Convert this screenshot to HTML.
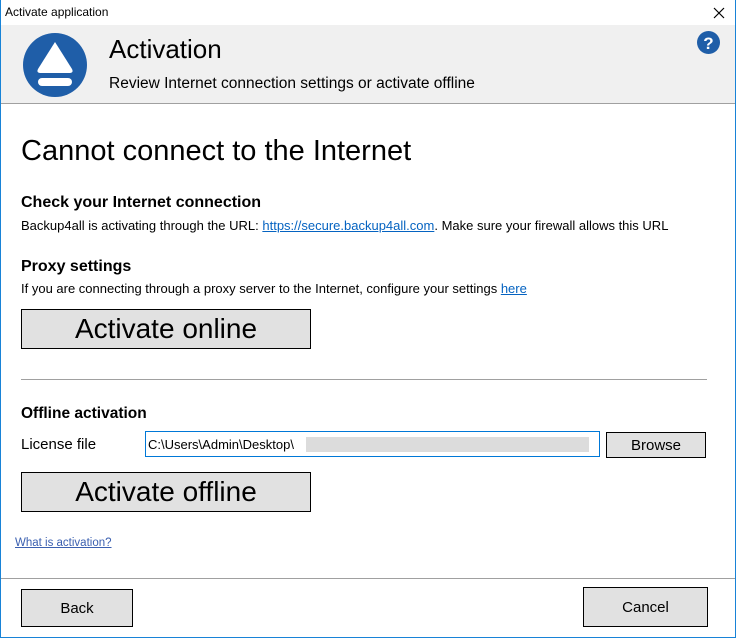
<!DOCTYPE html>
<html><head><style>
*{margin:0;padding:0;box-sizing:border-box}
body{width:736px;height:638px;background:#fff;font-family:"Liberation Sans",sans-serif;color:#000;position:relative;overflow:hidden}
.a{position:absolute;white-space:nowrap}
.frame{position:absolute;left:0;top:0;width:736px;height:638px;border:1px solid #1883d7;border-top:none}
.btn{position:absolute;background:#e1e1e1;border:1px solid #000;display:flex;align-items:center;justify-content:center}
a{color:#0563c1;text-decoration:underline}
</style></head><body>
<div class="frame"></div>
<div class="a" style="left:5px;top:5px;font-size:12px">Activate application</div>
<svg class="a" style="left:713px;top:7px" width="12" height="12" viewBox="0 0 12 12"><path d="M1 1L11 11M11 1L1 11" stroke="#000" stroke-width="1.2"/></svg>
<div class="a" style="left:1px;top:25px;width:734px;height:79px;background:#f0f0f0;border-bottom:1px solid #a0a0a0"></div>
<svg class="a" style="left:23px;top:33px" width="64" height="64" viewBox="0 0 64 64">
<circle cx="32" cy="32" r="32" fill="#1f5ea8"/>
<path d="M32 9 L49 36 Q51 40 46 40 L18 40 Q13 40 15 36 Z" fill="#fff"/>
<rect x="15" y="45" width="34" height="8" rx="4" fill="#fff"/>
</svg>
<svg class="a" style="left:697px;top:31px" width="23" height="23" viewBox="0 0 23 23"><circle cx="11.5" cy="11.5" r="11.5" fill="#1f5ea8"/><text x="11.5" y="18" text-anchor="middle" fill="#fff" font-family="Liberation Sans" font-weight="bold" font-size="17">?</text></svg>
<div class="a" style="left:109px;top:34px;font-size:26px">Activation</div>
<div class="a" style="left:109px;top:75px;font-size:15.5px">Review Internet connection settings or activate offline</div>
<div class="a" style="left:21px;top:135px;font-size:29px">Cannot connect to the Internet</div>
<div class="a" style="left:21px;top:194px;font-size:16px;font-weight:bold">Check your Internet connection</div>
<div class="a" style="left:21px;top:218px;font-size:13px">Backup4all is activating through the URL: <a>https://secure.backup4all.com</a>. Make sure your firewall allows this URL</div>
<div class="a" style="left:21px;top:258px;font-size:16px;font-weight:bold">Proxy settings</div>
<div class="a" style="left:21px;top:281px;font-size:13px">If you are connecting through a proxy server to the Internet, configure your settings <a>here</a></div>
<div class="btn" style="left:21px;top:309px;width:290px;height:40px;font-size:28px">Activate online</div>
<div class="a" style="left:21px;top:379px;width:686px;height:1px;background:#a0a0a0"></div>
<div class="a" style="left:21px;top:405px;font-size:15.5px;font-weight:bold">Offline activation</div>
<div class="a" style="left:21px;top:436px;font-size:15px">License file</div>
<div class="a" style="left:145px;top:431px;width:455px;height:26px;border:1px solid #0078d7;background:#fff"></div>
<div class="a" style="left:148px;top:437px;font-size:13px">C:\Users\Admin\Desktop\</div>
<div class="a" style="left:306px;top:437px;width:283px;height:15px;background:#dcdcdc"></div>
<div class="btn" style="left:606px;top:432px;width:100px;height:26px;font-size:15px">Browse</div>
<div class="btn" style="left:21px;top:472px;width:290px;height:40px;font-size:28px">Activate offline</div>
<div class="a" style="left:15px;top:537px;font-size:11.5px"><a style="color:#3a5fb0">What is activation?</a></div>
<div class="a" style="left:1px;top:578px;width:734px;height:1px;background:#a0a0a0"></div>
<div class="btn" style="left:21px;top:589px;width:112px;height:38px;font-size:15px">Back</div>
<div class="btn" style="left:583px;top:587px;width:125px;height:40px;font-size:15px">Cancel</div>
</body></html>
